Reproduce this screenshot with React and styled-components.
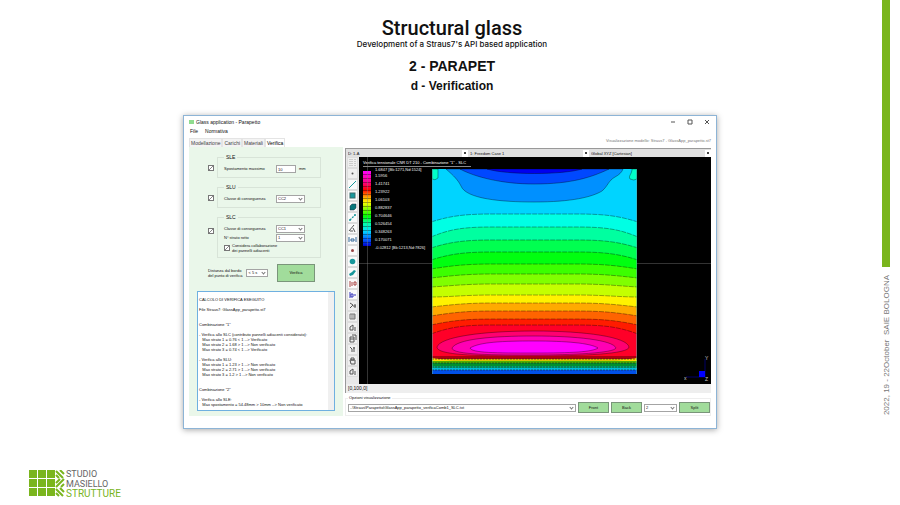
import React from "react";
import styled, { createGlobalStyle, css } from "styled-components";

const GlobalStyle = createGlobalStyle`
  * {
    box-sizing: border-box;
  }
  body {
    margin: 0;
    background: #fff;
    color: #111;
    font-family: "Liberation Sans", Arial, sans-serif;
  }
  button,
  input,
  select,
  textarea {
    font-family: inherit;
    margin: 0;
  }
`;

const Slide = styled.main`
  display: grid;
  grid-template-columns: 1fr 24px;
  min-height: 100vh;
`;

const Content = styled.div`
  display: flex;
  flex-direction: column;
  padding: 16px 0 6px 24px;
`;

const Heading = styled.header`
  display: flex;
  flex-direction: column;
  align-items: center;
  padding-left: 4px;
`;

const Title = styled.h1`
  margin: 0;
  font: 500 20px/24px Roboto, sans-serif;
`;

const Lead = styled.p`
  margin: 0;
  font: 500 8px/8px Inter, Roboto, sans-serif;
`;

const Topic = styled.h2`
  margin: ${(p) => (p.$small ? 0 : "8px 0 0")};
  font: 700 ${(p) => (p.$small ? 12 : 14)}px/20px "Liberation Sans", Arial, sans-serif;
`;

const Window = styled.section`
  width: 62.5%;
  min-width: 534px;
  max-width: 535px;
  align-self: center;
  margin-top: 19px;
  padding: 0 5px 12px;
  border: 1px solid #8db4d6;
  background: #fff;
  box-shadow: 0 1px 6px rgba(0, 0, 0, 0.35);
  font-size: 4px;
  line-height: 6px;
  color: #111;
`;

const TitleBar = styled.div`
  display: flex;
  align-items: center;
  gap: 2px;
  height: 12px;
  font-size: 5px;
`;

const AppIcon = styled.span`
  width: 5px;
  height: 4px;
  background: #8fdc8f;
`;

const WindowButtons = styled.div`
  display: flex;
  gap: 9px;
  margin-left: auto;
`;

const WindowButton = styled.button`
  display: flex;
  width: 8px;
  height: 8px;
  padding: 1px;
  border: 0;
  background: none;
`;

const MenuBar = styled.nav`
  display: flex;
  gap: 7px;
  height: 10px;
  padding-left: 1px;
  font-size: 5px;
  a {
    color: inherit;
    text-decoration: none;
  }
`;

const Columns = styled.div`
  display: grid;
  grid-template-columns: 154px 1fr;
  gap: 2px;
`;

const Side = styled.div`
  display: flex;
  flex-direction: column;
`;

const Tabs = styled.div`
  display: flex;
  height: 9px;
`;

const Tab = styled.button`
  padding: 0 1px;
  border: 1px solid #e4e4e4;
  border-bottom: 0;
  background: ${(p) => (p.$active ? "#fff" : "#f3f3f3")};
  color: ${(p) => (p.$active ? "#000" : "#444")};
  font-size: 5px;
  line-height: 6px;
`;

const Panel = styled.form`
  flex: 1;
  display: flex;
  flex-direction: column;
  padding: 7px 8px 5px;
  background: #eaf7ea;
`;

const CheckRow = styled.div`
  display: grid;
  grid-template-columns: 7px 1fr;
  align-items: ${(p) => (p.$tall ? "start" : "center")};
  gap: 2px;
  padding: 0 14px 0 11px;
  margin-bottom: 6px;
  > input {
    margin-top: ${(p) => (p.$tall ? "14px" : "4px")};
  }
`;

const Tick = styled.input`
  appearance: none;
  width: 6px;
  height: 6px;
  border: 1px solid #777;
  background: linear-gradient(135deg, transparent 45%, #888 45%, #888 60%, transparent 60%) #fff;
`;

const Group = styled.fieldset`
  display: flex;
  flex-direction: column;
  gap: 1px;
  min-width: 0;
  margin: 0;
  padding: 5px 6px 4px;
  border: 1px solid #d8e4d8;
  legend {
    padding: 0 2px;
    font-size: 5px;
  }
`;

const Field = styled.label`
  display: grid;
  grid-template-columns: 52px 1fr;
  align-items: center;
  justify-items: start;
  white-space: nowrap;
`;

const InputLine = styled.span`
  display: flex;
  align-items: center;
  gap: 3px;
`;

const control = css`
  height: 8px;
  padding: 0 1px;
  border: 1px solid #a4a4a4;
  border-radius: 0;
  background: #fff;
  color: #111;
  font-size: 4px;
  line-height: 6px;
`;

const TextInput = styled.input`
  ${control}
  width: 20px;
`;

const SelectBox = styled.span`
  position: relative;
  display: flex;
  flex: ${(p) => (p.$grow ? 1 : "none")};
  &::after {
    content: "";
    position: absolute;
    right: 3px;
    top: 2px;
    width: 2px;
    height: 2px;
    border: solid #777;
    border-width: 0 1px 1px 0;
    transform: rotate(45deg);
  }
`;

const NativeSelect = styled.select`
  ${control}
  appearance: none;
  width: ${(p) => p.$width || "100%"};
`;

const CheckLabel = styled.label`
  display: flex;
  align-items: center;
  gap: 2px;
  line-height: 5px;
`;

const DistanceRow = styled.div`
  display: flex;
  align-items: center;
  gap: 4px;
  padding: 0 20px 0 11px;
  line-height: 5px;
  white-space: nowrap;
`;

const GreenButton = styled.button`
  width: ${(p) => (p.$large ? "38px" : "31px")};
  height: ${(p) => (p.$large ? "18px" : "11px")};
  margin-left: ${(p) => (p.$large ? "auto" : 0)};
  padding: 0;
  border: 1px solid #7a957a;
  background: #a1dc9b;
  color: #111;
  font-size: 4px;
  line-height: 6px;
`;

const Report = styled.textarea`
  flex: 1;
  min-height: 120px;
  margin-top: 9px;
  padding: 5px 1px;
  border: 1px solid #6fb0e0;
  background: #fff;
  color: #111;
  font-size: 4px;
  line-height: 5px;
  resize: none;
  overflow: hidden;
  white-space: pre;
  box-shadow: inset -6px 0 #f0f0f0;
`;

const Viewer = styled.div`
  display: flex;
  flex-direction: column;
  min-width: 0;
`;

const FileNote = styled.p`
  margin: 0 0 4px;
  text-align: right;
  color: #777;
`;

const CaseBar = styled.div`
  display: grid;
  grid-template-columns: 122px 121px 1fr;
  border-top: 1px solid #999;
  border-left: 1px solid #999;
`;

const CaseSelect = styled.select`
  appearance: none;
  min-width: 0;
  height: 8px;
  padding: 0 2px;
  border: 0;
  border-radius: 0;
  background: linear-gradient(#444, #444) right 2px center / 2px 2px no-repeat,
    linear-gradient(#fff, #fff) right / 6px 7px no-repeat, #e0e0e0;
  color: #111;
  font-size: 4px;
`;

const Stage = styled.div`
  display: grid;
  grid-template-columns: 13px 1fr;
  height: 227px;
  border-left: 1px solid #999;
`;

const ToolBar = styled.div`
  display: grid;
  grid-template-rows: repeat(20, 11px);
  justify-items: center;
  background: #e8e8e8;
`;

const Tool = styled.button`
  display: flex;
  align-items: center;
  justify-content: center;
  width: 11px;
  height: 11px;
  padding: 0;
  border: 1px solid #ddd;
  background: ${(p) => (p.$raised ? "#fafafa" : "#efefef")};
`;

const Canvas = styled.div`
  position: relative;
  display: flex;
  align-items: flex-start;
  background: #000;
  color: #eee;
  &::before {
    content: "";
    position: absolute;
    left: 0;
    right: 0;
    top: 106px;
    border-top: 1px solid #333;
  }
  &::after {
    content: "";
    position: absolute;
    left: 8px;
    top: 0;
    bottom: 0;
    border-left: 1px solid rgba(130, 130, 130, 0.4);
  }
`;

const LegendBox = styled.div`
  flex: none;
  width: 73px;
  padding: 3px 0 0 4px;
  white-space: nowrap;
`;

const PlotTitle = styled.div`
  width: 108px;
  height: 7px;
  border-bottom: 1px solid #888;
  color: #fff;
`;

const Scale = styled.div`
  display: flex;
  gap: 4px;
  margin-top: 4px;
`;

const ColourBar = styled.div`
  flex: none;
  width: 8px;
  height: 75px;
  background: repeating-linear-gradient(transparent 0 3px, rgba(0, 0, 0, 0.35) 3px 4px),
    linear-gradient(#f0f, #f08 15%, #f00 25%, #fa0 35%, #ff0 42%, #0f0 60%, #0fa 70%, #0df 80%, #05f 92%, #00c);
`;

const Values = styled.ul`
  display: flex;
  flex-direction: column;
  margin: -4px 0 0;
  padding: 0;
  list-style: none;
  li {
    height: 8px;
  }
  li:first-child {
    height: 6px;
  }
`;

const Plate = styled.svg`
  position: relative;
  flex: none;
  width: 205px;
  height: 205px;
  margin-top: 12px;
`;

const Axes = styled.svg`
  position: absolute;
  right: 1px;
  bottom: 1px;
  width: 26px;
  height: 28px;
`;

const Status = styled.div`
  height: 9px;
  padding: 1px 2px;
  background: #eee;
  border-left: 1px solid #999;
  font-size: 5px;
`;

const Options = styled.fieldset`
  display: flex;
  align-items: center;
  gap: 2px;
  margin: 2px 0 0;
  padding: 1px 0 2px 2px;
  border: 1px solid #eee;
  min-width: 0;
  legend {
    padding: 0 1px;
  }
`;

const Footer = styled.footer`
  display: flex;
  align-items: center;
  gap: 1px;
  margin: auto 0 0 5px;
  font: 9px/10px Roboto, sans-serif;
  color: #666;
`;

const LogoText = styled.div`
  strong {
    display: block;
    font-size: 10px;
    font-weight: 400;
    color: #78b41c;
  }
`;

const Rail = styled.aside`
  display: flex;
  flex-direction: column;
  align-items: flex-start;
`;

const RailBar = styled.div`
  width: 8px;
  height: 267px;
  margin-left: 6px;
  background: #7ab51d;
`;

const RailText = styled.p`
  margin: 8px 0 0 5px;
  writing-mode: vertical-rl;
  transform: rotate(180deg);
  white-space: pre;
  font-size: 8px;
  line-height: 11px;
  color: #777;
`;

// [left/right edge y, centre y, fill below the line]
const bands = [
  [53, 45, "#00ffe4"],
  [68, 58, "#00ffa0"],
  [79, 71, "#00ff50"],
  [91, 83, "#00ff10"],
  [100, 95, "#3cff00"],
  [109, 105, "#80ff00"],
  [118, 115, "#c4ff00"],
  [128, 126, "#fff200"],
  [138, 134, "#ffaa00"],
  [147, 142, "#ff6400"],
  [156, 150, "#ff1c00"],
  [165, 156, "#ff0028"],
];

// thin layers close to the bottom support
const layers = [
  [187, 3, "#b00010"],
  [190, 2, "#d8c000"],
  [192, 2, "#50b000"],
  [194, 3, "#009030"],
  [197, 2, "#00a878"],
  [199, 2, "#00b8e0"],
  [201, 4, "#0050e8"],
];

function ContourPlate() {
  return (
    <Plate viewBox="0 0 205 205" role="img" aria-label="Stress contours">
      <rect width="205" height="205" fill="#00d4ff" />
      <g stroke="#000" strokeOpacity="0.5" strokeWidth="0.7">
        <path d="M14 0C22 7 26 11 29 17C34 30 70 33 102 33C140 33 160 28 170 22C176 17 176 12 183 8C187 6 190 3 191 0Z" fill="#0090ff" />
        <path d="M28 0C43 8 70 15 102 15C140 15 160 8 177 0Z" fill="#0048ff" />
        <path d="M55 0C75 6 130 6 150 0Z" fill="#0000f0" />
        <path d="M0 0H6V9Q3 12 0 10Z" fill="#00ffc8" />
        <path d="M205 0H200C200 5 196 7 198 10Q202 12 205 10Z" fill="#00ffc8" />
        {bands.map(([edge, mid, fill]) => (
          <path
            key={mid}
            d={`M-1 ${edge}C18 ${mid + 2} 32 ${mid} 60 ${mid}H145C173 ${mid} 187 ${mid + 2} 206 ${edge}V206H-1Z`}
            fill={fill}
            strokeDasharray="5 1"
          />
        ))}
        <path d="M5 178C8 168 50 162 102 162S195 168 197 178C197 185 150 187 102 187S5 187 5 178Z" fill="#ff0070" />
        <path d="M20 179C25 170 60 167 102 167S181 171 184 179C182 184 140 186 102 186S20 186 20 179Z" fill="#ff00b4" />
        <path d="M38 179C48 173 70 172 102 172S158 174 166 179C160 183 140 184 102 184S40 184 38 179Z" fill="#f0f" />
      </g>
      {layers.map(([y, height, fill]) => (
        <rect key={y} y={y} width="205" height={height} fill={fill} />
      ))}
      <path d="M0 189l14 2 8 1H0zM205 189l-14 2-8 1h22z" fill="#ffd800" />
      <path d="M0 190H205M0 194H205M0 198H205M0 201H205" stroke="#222" strokeDasharray="2 1" strokeWidth="0.6" />
      <path d="M0 0V205M205 0V205" stroke="#5aa" />
    </Plate>
  );
}

const teal = "#18979b";
const tools = [
  <path d="M2 1v7M4 1v7M7 1v7" stroke="#aaa" strokeDasharray="1 1" />,
  <circle cx="4.500" cy="4.500" r="1" fill="#555" />,
  <path d="M1 8L8 1" stroke={teal} />,
  <rect x="2" y="2" width="5" height="5" fill={teal} stroke="#386b6d" />,
  <path d="M2 4l2-2h4v4L6 8H2z" fill="#08777b" stroke="#234" strokeWidth="0.5" />,
  <path d="M2 7L7 2M1 7h3M6 2h2" stroke={teal} strokeWidth="1.3" strokeDasharray="2 1" />,
  <path d="M1 7L6 1M5 4l2 4M2 7h3" stroke="#555" fill="none" />,
  <path d="M1 2v5M8 2v5M3 4h3v2H3z" stroke="#369" fill="none" />,
  <circle cx="4.500" cy="4.500" r="1.500" fill="#944" />,
  <circle cx="4.500" cy="4.500" r="2.800" fill={teal} />,
  <path d="M1 6l3-2 2-2 2 1-3 4-3 1z" fill={teal} />,
  <path d="M2 2v6M4 3v4M6 3h2v3H6z" stroke="#a44" fill="none" />,
  <path d="M2 2v6M3 4h2v3H3zM6 5h2" stroke="#33b" fill="none" />,
  <path d="M2 2l3 2-3 3M5 5h3M7 3v4" stroke="#555" fill="none" />,
  <path d="M2 2h5v5H2zM4 2v5M6 2v5" stroke="#777" fill="none" />,
  <path d="M2 7V4l3-2v5zM7 4v4" stroke="#555" fill="none" />,
  <path d="M2 3h4v5H2zM4 1h4v5M2 5h4" stroke="#555" fill="none" />,
  <path d="M2 2l2 2v3M6 2v5M5 3h2" stroke="#555" fill="none" />,
  <path d="M3 2h3v2H3zM2 4h5v4H3z" stroke="#555" fill="none" />,
  <path d="M2 7V4l3-2v5zM7 4v4" stroke="#555" fill="none" />,
];

const values = [
  "1.6847 [Bk:1271,Nd:1524]",
  "1.5956",
  "1.41741",
  "1.23922",
  "1.06103",
  "0.882837",
  "0.704646",
  "0.526454",
  "0.348263",
  "0.170071",
  "-0.02812 [Bk:1213,Nd:7826]",
];

const report = `CALCOLO DI VERIFICA ESEGUITO

File Straus7: GlassApp_parapetto.st7


Combinazione "1"

- Verifica allo SLC (contributo pannelli adiacenti considerato):
   Max strato 1 = 0.76 < 1 --> Verificato
   Max strato 2 = 1.68 > 1 --> Non verificato
   Max strato 3 = 0.74 < 1 --> Verificato

- Verifica allo SLU:
   Max strato 1 = 1.23 > 1 --> Non verificato
   Max strato 2 = 2.71 > 1 --> Non verificato
   Max strato 3 = 1.2 > 1 --> Non verificato


Combinazione "2"

- Verifica allo SLE:
   Max spostamento = 54.48mm > 10mm --> Non verificato`;

function Select({ children, width, grow, label }) {
  return (
    <SelectBox $grow={grow}>
      <NativeSelect $width={width} aria-label={label}>
        <option>{children}</option>
      </NativeSelect>
    </SelectBox>
  );
}

function Logo() {
  return (
    <svg width="36" height="28" viewBox="0 0 36 28" aria-hidden="true">
      {[0, 9, 18].map((x) =>
        [0, 9, 18].map((y) => (
          <rect key={`${x}-${y}`} x={x} y={y} width="8" height="8" fill="#7ab51d" />
        ))
      )}
      <g fill="none" stroke="#7ab51d" strokeWidth="2">
        <path d="M27 1l7 7M31 0l4 4M27 5l3 3" />
        <path d="M35 9l-8 8M35 14l-3 3M31 9l-4 4" />
        <path d="M27 19l7 7M31 18l4 4M27 23l3 3" />
      </g>
    </svg>
  );
}

function Verification() {
  return (
    <Side>
      <Tabs role="tablist">
        {["Modellazione", "Carichi", "Materiali", "Verifica"].map((name) => (
          <Tab key={name} role="tab" $active={name === "Verifica"}>
            {name}
          </Tab>
        ))}
      </Tabs>
      <Panel onSubmit={(e) => e.preventDefault()}>
        <CheckRow>
          <Tick type="checkbox" defaultChecked aria-label="SLE" />
          <Group>
            <legend>SLE</legend>
            <Field>
              Spostamento massimo
              <InputLine>
                <TextInput defaultValue="10" /> mm
              </InputLine>
            </Field>
          </Group>
        </CheckRow>
        <CheckRow>
          <Tick type="checkbox" defaultChecked aria-label="SLU" />
          <Group>
            <legend>SLU</legend>
            <Field>
              Classe di conseguenza
              <Select width="29px">CC2</Select>
            </Field>
          </Group>
        </CheckRow>
        <CheckRow $tall>
          <Tick type="checkbox" defaultChecked aria-label="SLC" />
          <Group>
            <legend>SLC</legend>
            <Field>
              Classe di conseguenza
              <Select width="29px">CC1</Select>
            </Field>
            <Field>
              N° strato rotto
              <Select width="29px">1</Select>
            </Field>
            <CheckLabel>
              <Tick type="checkbox" defaultChecked />
              <span>
                Considera collaborazione
                <br />
                dei pannelli adiacenti
              </span>
            </CheckLabel>
          </Group>
        </CheckRow>
        <DistanceRow>
          <span>
            Distanza dal bordo
            <br />
            del punto di verifica
          </span>
          <Select width="22px" label="Distanza dal bordo">
            &lt; 5 s
          </Select>
          <GreenButton $large>Verifica</GreenButton>
        </DistanceRow>
        <Report aria-label="Risultati" defaultValue={report} spellCheck={false} />
      </Panel>
    </Side>
  );
}

function ModelViewer() {
  return (
    <Viewer>
      <FileNote>Visualizzazione modello: Straus7 - GlassApp_parapetto.st7</FileNote>
      <CaseBar>
        {["D: 1-A", "1: Freedom Case 1", "Global XYZ [Cartesian]"].map((name) => (
          <CaseSelect key={name} aria-label={name}>
            <option>{name}</option>
          </CaseSelect>
        ))}
      </CaseBar>
      <Stage>
        <ToolBar>
          {tools.map((icon, i) => (
            <Tool key={i} type="button" aria-label={`Tool ${i + 1}`} $raised={i > 1 && i < 13}>
              <svg width="9" height="9" viewBox="0 0 9 9">
                {icon}
              </svg>
            </Tool>
          ))}
        </ToolBar>
        <Canvas>
          <LegendBox>
            <PlotTitle>Verifica tensionale CNR DT 210 - Combinazione "1" - SLC</PlotTitle>
            <Scale>
              <ColourBar />
              <Values>
                {values.map((value) => (
                  <li key={value}>{value}</li>
                ))}
              </Values>
            </Scale>
          </LegendBox>
          <ContourPlate />
          <Axes viewBox="0 0 26 28" aria-hidden="true">
            <path d="M2 22H21V4" stroke="#006" fill="none" />
            <rect x="15" y="16" width="6" height="6" fill="#00f" />
            <g fill="#ccc" fontSize="5">
              <text x="0" y="25">x</text>
              <text x="21" y="5">Y</text>
              <text x="21" y="26">Z</text>
            </g>
          </Axes>
        </Canvas>
      </Stage>
      <Status>[0,100,0]</Status>
      <Options>
        <legend>Opzioni visualizzazione</legend>
        <Select grow label="File">
          ..\Straus\Parapetto\GlassApp_parapetto_verificaComb1_SLC.txt
        </Select>
        <GreenButton>Front</GreenButton>
        <GreenButton>Back</GreenButton>
        <Select width="33px" label="Strato">
          2
        </Select>
        <GreenButton>Split</GreenButton>
      </Options>
    </Viewer>
  );
}

export default function App() {
  return (
    <>
      <GlobalStyle />
      <Slide>
        <Content>
          <Heading>
            <Title>Structural glass</Title>
            <Lead>Development of a Straus7's API based application</Lead>
            <Topic>2 - PARAPET</Topic>
            <Topic $small>d - Verification</Topic>
          </Heading>
          <Window>
            <TitleBar>
              <AppIcon />
              Glass application - Parapetto
              <WindowButtons>
                {["M1 3h4", "M1 1h4v4h-4z", "M1 1l4 4M5 1l-4 4"].map((d, i) => (
                  <WindowButton key={d} aria-label={["Minimize", "Maximize", "Close"][i]}>
                    <svg width="6" height="6" viewBox="0 0 6 6" fill="none" stroke="#555">
                      <path d={d} />
                    </svg>
                  </WindowButton>
                ))}
              </WindowButtons>
            </TitleBar>
            <MenuBar>
              <a href="#file">File</a>
              <a href="#normativa">Normativa</a>
            </MenuBar>
            <Columns>
              <Verification />
              <ModelViewer />
            </Columns>
          </Window>
          <Footer>
            <Logo />
            <LogoText>
              STUDIO
              <br />
              MASIELLO
              <strong>STRUTTURE</strong>
            </LogoText>
          </Footer>
        </Content>
        <Rail>
          <RailBar />
          <RailText>2022, 19 - 22October  SAIE BOLOGNA</RailText>
        </Rail>
      </Slide>
    </>
  );
}
